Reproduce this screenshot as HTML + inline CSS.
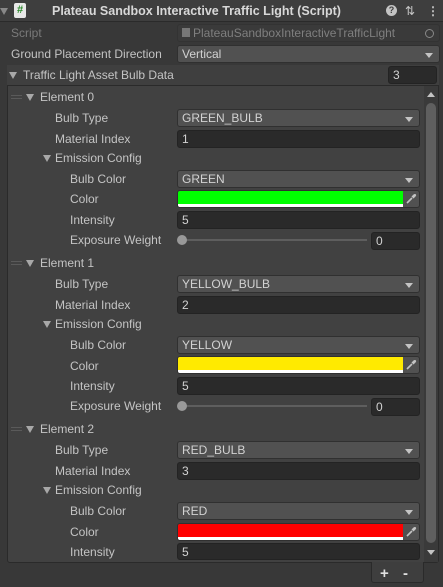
<!DOCTYPE html>
<html><head><meta charset="utf-8"><style>
*{margin:0;padding:0;box-sizing:border-box}
body{width:443px;height:587px;background:#383838;font-family:"Liberation Sans",sans-serif;font-size:12px;color:#c4c4c4;position:relative;overflow:hidden}
.a{position:absolute}
.lbl{position:absolute;height:18px;line-height:18px;white-space:nowrap}
.fld{position:absolute;left:177px;width:243px;height:18px;border-radius:3px;line-height:17px;padding-left:4px;color:#d2d2d2}
.in{background:#2a2a2a;border:1px solid #232323}
.dd{background:#515151;border:1px solid #303030}
.dd:after{content:"";position:absolute;right:6px;top:7px;border-left:4px solid transparent;border-right:4px solid transparent;border-top:5px solid #c4c4c4}
.tri{position:absolute;width:0;height:0;border-left:4px solid transparent;border-right:4px solid transparent;border-top:7px solid #a8a8a8}
.grip{position:absolute;left:11px;width:11px;height:4px;border-top:1px solid #5a5a5a;border-bottom:1px solid #5a5a5a}
.col{position:absolute;left:177px;width:243px;height:18px;border:1px solid #303030;border-radius:3px;background:#515151;overflow:hidden}
.col .c{position:absolute;left:0;top:0;width:225px;height:13px}
.col .w{position:absolute;left:0;top:13px;width:225px;height:4px;background:#fff}
.col svg{position:absolute;left:227px;top:2px}
.slider{position:absolute;left:177px;width:190px;height:18px}
.slider .t{position:absolute;left:4px;right:0;top:8px;height:2px;background:#5e5e5e}
.slider .k{position:absolute;left:0;top:4px;width:10px;height:10px;border-radius:50%;background:#999}
.num{position:absolute;left:371px;width:49px;height:18px;background:#2a2a2a;border:1px solid #232323;border-radius:3px;line-height:17px;padding-left:4px;color:#d2d2d2}
</style></head><body>
<div class="a" style="left:0;top:0;width:443px;height:22px;background:#3e3e3e;border-bottom:1px solid #2a2a2a"></div>
<div class="tri" style="left:0;top:8px;border-top-color:#888"></div>
<div class="a" style="left:14px;top:3px;width:12px;height:15px;background:#e8e8e8;border-radius:2px;color:#2a8a2a;font-size:11px;font-weight:bold;line-height:15px;text-align:center">#</div>
<div class="lbl" style="left:52px;top:2px;font-weight:bold;color:#d8d8d8;font-size:12.5px">Plateau Sandbox Interactive Traffic Light (Script)</div>
<div class="a" style="left:386px;top:5px;width:11px;height:11px;border-radius:50%;background:#c4c4c4;color:#3e3e3e;font-size:9px;font-weight:bold;text-align:center;line-height:11px">?</div>
<div class="lbl" style="left:405px;top:2px;color:#c4c4c4">⇅</div>
<div class="lbl" style="left:427px;top:2px;color:#c4c4c4;font-weight:bold">⋮</div>

<div class="lbl" style="left:11px;top:24px;color:#7a7a7a">Script</div>
<div class="fld" style="top:24px;background:#3a3a3a;border:1px solid #333;color:#7f7f7f;width:263px;padding-left:4px;overflow:hidden;white-space:nowrap"><span style="display:inline-block;width:8px;height:9px;background:#777;margin-right:3px"></span>PlateauSandboxInteractiveTrafficLight</div>
<div class="a" style="left:425px;top:29px;width:9px;height:9px;border:1px solid #888;border-radius:50%"></div>

<div class="lbl" style="left:11px;top:45px">Ground Placement Direction</div>
<div class="fld dd" style="top:45px;width:263px">Vertical</div>

<div class="a" style="left:7px;top:65px;width:432px;height:20px;background:#3f3f3f"></div>
<div class="tri" style="left:9px;top:72px"></div>
<div class="lbl" style="left:23px;top:66px">Traffic Light Asset Bulb Data</div>
<div class="num" style="left:388px;top:66px;width:49px">3</div>

<div class="a" style="left:7px;top:85px;width:432px;height:478px;background:#414141;border:1px solid #2a2a2a;border-radius:0 0 3px 3px"></div>
<div class="a" style="left:424px;top:86px;width:14px;height:476px;background:#3a3a3a"></div>
<div class="a" style="left:426px;top:103px;width:10px;height:440px;background:#5f5f5f;border-radius:5px"></div>
<div class="a" style="left:427px;top:92px;border-left:4px solid transparent;border-right:4px solid transparent;border-bottom:5px solid #c4c4c4"></div>
<div class="a" style="left:427px;top:550px;border-left:4px solid transparent;border-right:4px solid transparent;border-top:5px solid #c4c4c4"></div>

<!-- Element 0 -->
<div class="grip" style="top:95px"></div><div class="tri" style="left:26px;top:94px"></div>
<div class="lbl" style="left:40px;top:88px">Element 0</div>
<div class="lbl" style="left:55px;top:109px">Bulb Type</div><div class="fld dd" style="top:109px">GREEN_BULB</div>
<div class="lbl" style="left:55px;top:130px">Material Index</div><div class="fld in" style="top:130px">1</div>
<div class="tri" style="left:43px;top:155px"></div><div class="lbl" style="left:55px;top:149px">Emission Config</div>
<div class="lbl" style="left:70px;top:170px">Bulb Color</div><div class="fld dd" style="top:170px">GREEN</div>
<div class="lbl" style="left:70px;top:190px">Color</div><div class="col" style="top:190px"><div class="c" style="background:#00ff00"></div><div class="w"></div><svg width="12" height="12" viewBox="0 0 12 12"><path d="M2 10 L7 5" stroke="#c4c4c4" stroke-width="1.6"/><path d="M6.5 3.5 L8.5 1.5 Q10 0.5 11 1.5 Q11.5 2.5 10.5 3.5 L8.5 5.5 Z" fill="#c4c4c4"/></svg></div>
<div class="lbl" style="left:70px;top:211px">Intensity</div><div class="fld in" style="top:211px">5</div>
<div class="lbl" style="left:70px;top:231px">Exposure Weight</div><div class="slider" style="top:231px"><div class="t"></div><div class="k"></div></div><div class="num" style="top:232px">0</div>

<!-- Element 1 -->
<div class="grip" style="top:261px"></div><div class="tri" style="left:26px;top:260px"></div>
<div class="lbl" style="left:40px;top:254px">Element 1</div>
<div class="lbl" style="left:55px;top:275px">Bulb Type</div><div class="fld dd" style="top:275px">YELLOW_BULB</div>
<div class="lbl" style="left:55px;top:296px">Material Index</div><div class="fld in" style="top:296px">2</div>
<div class="tri" style="left:43px;top:321px"></div><div class="lbl" style="left:55px;top:315px">Emission Config</div>
<div class="lbl" style="left:70px;top:336px">Bulb Color</div><div class="fld dd" style="top:336px">YELLOW</div>
<div class="lbl" style="left:70px;top:357px">Color</div><div class="col" style="top:356px"><div class="c" style="background:#ffea00"></div><div class="w"></div><svg width="12" height="12" viewBox="0 0 12 12"><path d="M2 10 L7 5" stroke="#c4c4c4" stroke-width="1.6"/><path d="M6.5 3.5 L8.5 1.5 Q10 0.5 11 1.5 Q11.5 2.5 10.5 3.5 L8.5 5.5 Z" fill="#c4c4c4"/></svg></div>
<div class="lbl" style="left:70px;top:377px">Intensity</div><div class="fld in" style="top:377px">5</div>
<div class="lbl" style="left:70px;top:397px">Exposure Weight</div><div class="slider" style="top:397px"><div class="t"></div><div class="k"></div></div><div class="num" style="top:398px">0</div>

<!-- Element 2 -->
<div class="grip" style="top:427px"></div><div class="tri" style="left:26px;top:426px"></div>
<div class="lbl" style="left:40px;top:420px">Element 2</div>
<div class="lbl" style="left:55px;top:441px">Bulb Type</div><div class="fld dd" style="top:441px">RED_BULB</div>
<div class="lbl" style="left:55px;top:462px">Material Index</div><div class="fld in" style="top:462px">3</div>
<div class="tri" style="left:43px;top:487px"></div><div class="lbl" style="left:55px;top:481px">Emission Config</div>
<div class="lbl" style="left:70px;top:502px">Bulb Color</div><div class="fld dd" style="top:502px">RED</div>
<div class="lbl" style="left:70px;top:523px">Color</div><div class="col" style="top:523px"><div class="c" style="background:#ff0000"></div><div class="w"></div><svg width="12" height="12" viewBox="0 0 12 12"><path d="M2 10 L7 5" stroke="#c4c4c4" stroke-width="1.6"/><path d="M6.5 3.5 L8.5 1.5 Q10 0.5 11 1.5 Q11.5 2.5 10.5 3.5 L8.5 5.5 Z" fill="#c4c4c4"/></svg></div>
<div class="lbl" style="left:70px;top:543px">Intensity</div><div class="fld in" style="top:543px;height:17px">5</div>

<div class="a" style="left:371px;top:562px;width:53px;height:21px;background:#3e3e3e;border:1px solid #2a2a2a;border-top:none;border-radius:0 0 3px 3px"></div>
<div class="lbl" style="left:380px;top:565px;font-weight:bold;color:#e0e0e0;font-size:15px">+</div>
<div class="lbl" style="left:403px;top:565px;font-weight:bold;color:#e0e0e0;font-size:15px">-</div>
</body></html>
